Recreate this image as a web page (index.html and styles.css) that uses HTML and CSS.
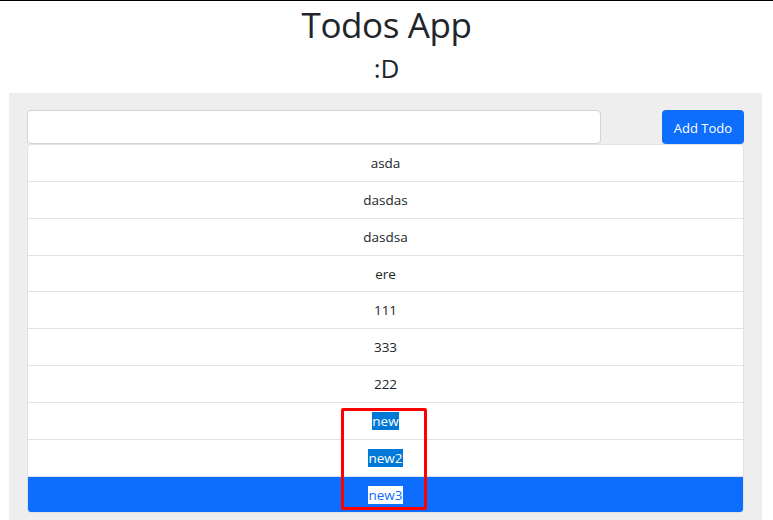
FILE: index.html
```html
<!DOCTYPE html>
<html>
<head>
<meta charset="utf-8">
<link rel="stylesheet" href="styles.css">
</head>
<body>
<header class="head">
  <h1 class="title">Todos App</h1>
  <h3 class="subtitle">:D</h3>
</header>
<main class="panel">
  <form class="add-row">
    <input class="todo-input" type="text">
    <button class="add-btn" type="button">Add Todo</button>
  </form>
  <ul class="list">
    <li class="item">asda</li>
    <li class="item">dasdas</li>
    <li class="item">dasdsa</li>
    <li class="item">ere</li>
    <li class="item">111</li>
    <li class="item">333</li>
    <li class="item">222</li>
    <li class="item"><span class="sel">new</span></li>
    <li class="item"><span class="sel">new2</span></li>
    <li class="item active"><span class="sel sel-inv">new3</span></li>
  </ul>
  <div class="mark"></div>
</main>
</body>
</html>
```

FILE: styles.css
```css
html {
  border-top: 1px solid #000;
}
body {
  margin: 0;
  font-family: "Open Sans", "Noto Sans", sans-serif;
  color: #212529;
  background: #fff;
  overflow: hidden;
}
.head {
  text-align: center;
}
.title {
  margin: 0;
  font-size: 35px;
  letter-spacing: -0.4px;
  font-weight: 400;
  line-height: 48px;
}
.subtitle {
  margin: 3px 0 8px;
  font-size: 26px;
  font-weight: 400;
  line-height: 33px;
}
.panel {
  position: relative;
  margin: 0 11px 0 9px;
  background: #eeeeee;
  padding: 17px 18px 20px;
}
.add-row {
  display: flex;
  justify-content: space-between;
  margin: 0;
}
.todo-input {
  box-sizing: border-box;
  width: 574px;
  height: 34px;
  border: 1px solid #ced4da;
  border-radius: 4px;
  background: #fff;
  margin: 0;
}
.add-btn {
  box-sizing: border-box;
  width: 82px;
  height: 34px;
  border: 0;
  border-radius: 4px;
  background: #0d6efd;
  color: #fff;
  font-family: inherit;
  font-size: 13px;
  padding: 1px 0 0;
}
.list {
  list-style: none;
  margin: 0;
  padding: 0;
  border: 1px solid #dee2e6;
  border-radius: 4px;
  overflow: hidden;
  background: #fff;
}
.item {
  text-align: center;
  font-size: 13.5px;
  line-height: 19.85px;
  padding: 9px 16px 7px;
  border-bottom: 1px solid #dee2e6;
}
.item:last-child {
  border-bottom: 0;
}
.item.active {
  background: #0d6efd;
  color: #fff;
}
.sel {
  background: #0078d7;
  color: #fff;
}
.sel-inv {
  background: #fff;
  color: #0d6efd;
}
.mark {
  position: absolute;
  left: 332px;
  top: 315px;
  width: 80px;
  height: 96px;
  border: 3px solid #ff0000;
  border-radius: 2px;
}
```
